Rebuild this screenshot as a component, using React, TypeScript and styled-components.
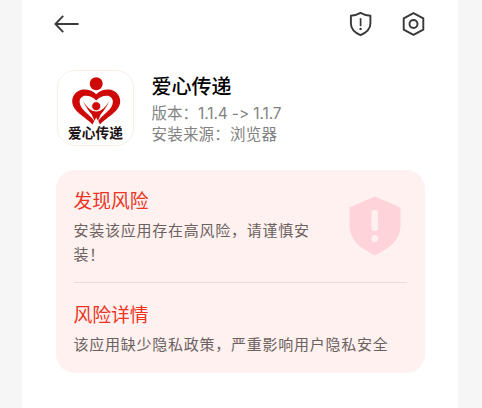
import React from "react";
import styled, { createGlobalStyle } from "styled-components";

const GlobalStyle = createGlobalStyle`
  * { box-sizing: border-box; }
  body {
    margin: 0;
    background: #f6f6f6;
    font-family: "Noto Sans CJK SC", sans-serif;
    overflow: hidden;
  }
  svg { display: block; flex: none; }
`;

const Screen = styled.main`
  width: 436px;
  height: 408px;
  margin-left: 22px;
  background: #fff;
`;

const TopBar = styled.header`
  display: flex;
  align-items: center;
  height: 47px;
  padding: 0 32px 0 31px;
`;

const Actions = styled.nav`
  display: flex;
  gap: 28px;
  margin-left: auto;
`;

const AppHeader = styled.section`
  display: flex;
  gap: 17.5px;
  height: 99px;
  padding: 22px 0 0 35px;
`;

const AppIcon = styled.div`
  display: flex;
  flex-direction: column;
  align-items: center;
  width: 77px;
  height: 76px;
  margin-top: 1px;
  padding-top: 6px;
  border: 1px solid #fbeee9;
  border-radius: 18px;
  background: #fff;
`;

const IconLabel = styled.span`
  height: 16px;
  margin-top: -1.5px;
  font-size: 13.7px;
  line-height: 16px;
  font-weight: 700;
  color: #1c1414;
  white-space: nowrap;
`;

const AppInfo = styled.div`
  padding-top: 3px;
`;

const AppName = styled.h1`
  margin: 0 0 3px;
  font-size: 20px;
  line-height: 27px;
  font-weight: 500;
  color: #000;
`;

const Meta = styled.p<{ $tracking: number }>`
  margin: 0;
  font-size: 15.5px;
  line-height: 21px;
  letter-spacing: ${(p) => p.$tracking}px;
  color: #828282;
  white-space: pre;
`;

const VersionNumbers = styled.span`
  font-family: Inter, sans-serif;
  font-size: 15.5px;
  line-height: 1;
  letter-spacing: -0.12px;
  font-feature-settings: "calt" 0;
`;

const RiskCard = styled.section`
  width: 369px;
  height: 203px;
  margin: 24px 0 0 34px;
  padding: 16px 18px 0 17.5px;
  border-radius: 19px;
  background: #fef1ef;
`;

const RiskSummary = styled.div`
  display: flex;
  justify-content: space-between;
  height: 97px;
  padding-right: 6.5px;
  border-bottom: 1px solid #e9dcdb;
`;

const RiskDetail = styled.div`
  padding-top: 17px;
`;

const RiskTitle = styled.h2`
  margin: 0 0 4px;
  font-size: 18.8px;
  line-height: 28px;
  font-weight: 400;
  color: #ee3322;
`;

const RiskText = styled.p<{ $width?: number }>`
  margin: 0;
  width: ${(p) => (p.$width ? `${p.$width}px` : "auto")};
  font-size: 15px;
  line-height: 24px;
  letter-spacing: 0.75px;
  color: #6b6160;
`;

const ShieldSlot = styled.div`
  padding-top: 10px;
`;

const BackArrow = () => (
  <svg width="28" height="20" viewBox="0 0 28 20" fill="none" stroke="#3b3b3b" strokeWidth="1.9">
    <path d="M10.2 1.8 2.4 10l7.8 8.2M2.6 10h23" />
  </svg>
);

const ShieldOutline = () => (
  <svg width="25" height="26" viewBox="0 0 25 26" fill="none" stroke="#383838" strokeWidth="1.9" strokeLinejoin="round">
    <path d="M12.5 1.9Q17 4.4 22.4 4.8v7.7c0 5.2-4.3 9.2-9.9 11.7-5.6-2.5-9.6-6.5-9.6-11.7V4.8Q8 4.4 12.5 1.9Z" />
    <path d="M12.6 7.2v8" strokeWidth="1.7" />
    <circle cx="12.6" cy="17.9" r="1.2" fill="#383838" stroke="none" />
  </svg>
);

const HexSettings = () => (
  <svg width="25" height="26" viewBox="0 0 25 26" fill="none" stroke="#383838" strokeWidth="1.9" strokeLinejoin="round">
    <path d="m12.5 2.1 9.8 5.3v11.2l-9.8 5.3-9.8-5.3V7.4Z" />
    <circle cx="12.5" cy="13" r="4" />
  </svg>
);

const HeartLogo = () => (
  <svg width="52" height="48" viewBox="0 0 52 48">
    <circle cx="26.2" cy="6.7" r="6.5" fill="#cf0808" />
    <path
      fill="#cf0808"
      d="M26.2 17.3C22.5 13.4 18 12.2 13.6 12.4 7 12.8 2.2 18 2.2 24 2.2 34.5 15 39.5 22.5 47.5L24.3 44C20.5 38 9.6 32.5 9.6 24.8 9.6 21 12.4 18.7 15.5 18.7 20 18.7 23.5 20.5 26.2 23.4 29 20.5 32.5 18.7 37 18.7 40 18.7 42.9 21 42.9 24.8 42.9 32.5 32 38 28.2 44L30 47.5C37.5 39.5 50.2 34.5 50.2 24 50.2 18 45.4 12.8 38.8 12.4 34.4 12.2 29.9 13.4 26.2 17.3Z"
    />
    <path
      fill="#cf0808"
      d="M13.1 24C16.9 30 20.8 34.3 26.2 34.6 31.6 34.3 35.5 30 39.3 24 36.8 29.5 34 33.7 30.8 37.2L27.9 43.7 26.2 40.6 24.5 43.7 21.6 37.2C18.4 33.7 15.6 29.5 13.1 24Z"
    />
    <circle cx="26.2" cy="29.2" r="4.5" fill="#cf0808" stroke="#fff" strokeWidth="0.8" />
  </svg>
);

const ShieldFilled = () => (
  <svg width="52" height="60" viewBox="0 0 52 60">
    <path fill="#fed3d9" d="M25.9.5 51.5 11.6v17.2C51.5 43.8 41 52.2 25.9 59.3 10.5 52.2.5 43.8.5 28.8V11.6Z" />
    <rect x="22.5" y="14" width="6.4" height="20.8" rx="2.2" fill="#fff1f0" />
    <circle cx="25.8" cy="42.5" r="3.4" fill="#fff1f0" />
  </svg>
);

export default function App() {
  return (
    <>
      <GlobalStyle />
      <Screen>
        <TopBar>
          <BackArrow />
          <Actions>
            <ShieldOutline />
            <HexSettings />
          </Actions>
        </TopBar>
        <AppHeader>
          <AppIcon>
            <HeartLogo />
            <IconLabel>爱心传递</IconLabel>
          </AppIcon>
          <AppInfo>
            <AppName>爱心传递</AppName>
            <Meta $tracking={0}>
              版本：<VersionNumbers>1.1.4 -&gt; 1.1.7</VersionNumbers>
            </Meta>
            <Meta $tracking={0.2}>安装来源：浏览器</Meta>
          </AppInfo>
        </AppHeader>
        <RiskCard>
          <RiskSummary>
            <div>
              <RiskTitle>发现风险</RiskTitle>
              <RiskText $width={242}>安装该应用存在高风险，请谨慎安装！</RiskText>
            </div>
            <ShieldSlot>
              <ShieldFilled />
            </ShieldSlot>
          </RiskSummary>
          <RiskDetail>
            <RiskTitle>风险详情</RiskTitle>
            <RiskText>该应用缺少隐私政策，严重影响用户隐私安全</RiskText>
          </RiskDetail>
        </RiskCard>
      </Screen>
    </>
  );
}
